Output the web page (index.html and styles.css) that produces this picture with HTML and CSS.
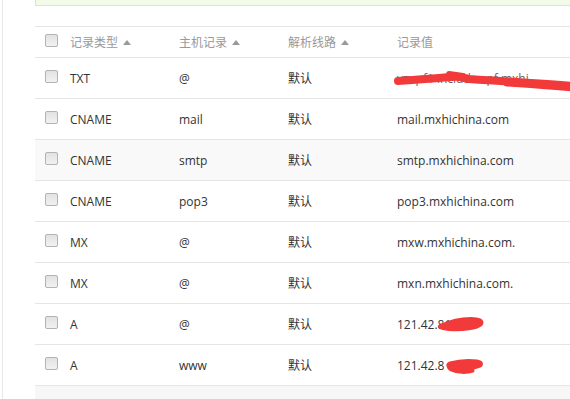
FILE: index.html
```html
<!DOCTYPE html>
<html>
<head>
<meta charset="utf-8">
<link rel="stylesheet" href="styles.css">
</head>
<body>
<div class="frame">
  <div class="content">
    <div class="notice"></div>
    <table class="records">
      <colgroup>
        <col class="c-check"><col class="c-col"><col class="c-col"><col class="c-col"><col>
      </colgroup>
      <thead>
        <tr>
          <th><span class="cb"></span></th>
          <th><span class="zh">记录类型</span><i class="sort"></i></th>
          <th><span class="zh">主机记录</span><i class="sort"></i></th>
          <th><span class="zh">解析线路</span><i class="sort"></i></th>
          <th><span class="zh">记录值</span></th>
        </tr>
      </thead>
      <tbody>
        <tr>
          <td><span class="cb"></span></td>
          <td>TXT</td>
          <td>@</td>
          <td><span class="zh">默认</span></td>
          <td class="val"><span class="faint">v=spf1 include:spf.mxhi</span>
            <svg class="redact" width="180" height="40" viewBox="0 0 180 40"><path d="M1 23 C 20 22, 40 20, 55 19 C 62 18, 66 20, 72 21 C 100 23, 140 25, 176 28" fill="none" stroke="#f23a3a" stroke-width="8" stroke-linecap="round"/><path d="M52 16 L66 18" fill="none" stroke="#f23a3a" stroke-width="6" stroke-linecap="round"/><path d="M110 25 C 130 26, 150 28, 178 30" fill="none" stroke="#f23a3a" stroke-width="7" stroke-linecap="round"/></svg>
          </td>
        </tr>
        <tr>
          <td><span class="cb"></span></td>
          <td>CNAME</td>
          <td>mail</td>
          <td><span class="zh">默认</span></td>
          <td>mail.mxhichina.com</td>
        </tr>
        <tr class="alt">
          <td><span class="cb"></span></td>
          <td>CNAME</td>
          <td>smtp</td>
          <td><span class="zh">默认</span></td>
          <td>smtp.mxhichina.com</td>
        </tr>
        <tr>
          <td><span class="cb"></span></td>
          <td>CNAME</td>
          <td>pop3</td>
          <td><span class="zh">默认</span></td>
          <td>pop3.mxhichina.com</td>
        </tr>
        <tr>
          <td><span class="cb"></span></td>
          <td>MX</td>
          <td>@</td>
          <td><span class="zh">默认</span></td>
          <td>mxw.mxhichina.com.</td>
        </tr>
        <tr>
          <td><span class="cb"></span></td>
          <td>MX</td>
          <td>@</td>
          <td><span class="zh">默认</span></td>
          <td>mxn.mxhichina.com.</td>
        </tr>
        <tr>
          <td><span class="cb"></span></td>
          <td>A</td>
          <td>@</td>
          <td><span class="zh">默认</span></td>
          <td class="val">121.42.81
            <svg class="redact" width="180" height="40" viewBox="0 0 180 40"><path d="M44 22 C 52 18, 62 15, 74 15 C 82 15, 86 17, 84 20 C 80 24, 66 26, 52 25 C 45 24, 42 23, 44 22 Z" fill="#f23a3a" stroke="#f23a3a" stroke-width="4" stroke-linejoin="round"/></svg>
          </td>
        </tr>
        <tr>
          <td><span class="cb"></span></td>
          <td>A</td>
          <td>www</td>
          <td><span class="zh">默认</span></td>
          <td class="val">121.42.8
            <svg class="redact" width="180" height="40" viewBox="0 0 180 40"><path d="M53 18 C 60 16, 72 15, 80 16 C 86 17, 86 21, 80 22 C 76 23, 74 24, 76 26 C 70 28, 60 28, 54 25 C 50 22, 50 19, 53 18 Z" fill="#f23a3a" stroke="#f23a3a" stroke-width="3" stroke-linejoin="round"/></svg>
          </td>
        </tr>
      </tbody>
    </table>
    <div class="footer"></div>
  </div>
</div>
</body>
</html>
```

FILE: styles.css
```css
html, body {
  margin: 0;
  padding: 0;
  background: #fff;
}
body {
  font-family: "Open Sans", "Noto Sans CJK SC", sans-serif;
  font-size: 12px;
  color: #333;
  width: 570px;
  height: 399px;
  overflow: hidden;
}
.frame {
  margin-left: 2px;
  border-left: 1px solid #e8e8e8;
  height: 399px;
  padding-left: 32px;
  overflow: hidden;
}
.content {
  width: 560px;
}
.notice {
  height: 5px;
  background: #f2fbe8;
  border-left: 1px solid #d3ebc0;
  border-bottom: 1px solid #d3ebc0;
}
.records {
  margin-top: 20px;
  width: 560px;
  border-collapse: collapse;
  table-layout: fixed;
  border-top: 1px solid #e5e5e5;
}
.c-check { width: 35px; }
.c-col { width: 109px; }
.records th, .records td {
  padding: 0;
  text-align: left;
  vertical-align: middle;
  white-space: nowrap;
  border-bottom: 1px solid #e5e5e5;
}
.records th {
  height: 30px;
  font-weight: normal;
  color: #999;
}
.records td {
  height: 40px;
}
.records th:first-child, .records td:first-child {
  padding-left: 10px;
}
.records tr.alt td {
  background: #f9f9f9;
}
.zh {
  font-family: "Noto Sans CJK SC", sans-serif;
  font-size: 12px;
}
.cb {
  display: block;
  width: 11px;
  height: 11px;
  border: 1px solid #b3b3b3;
  border-radius: 2px;
  background: linear-gradient(#e2e2e2, #f1f1f1);
  box-sizing: content-box;
  margin-top: -3px;
}
.sort {
  display: inline-block;
  width: 0;
  height: 0;
  border-left: 4.5px solid transparent;
  border-right: 4.5px solid transparent;
  border-bottom: 5px solid #9a9a9a;
  margin-left: 5px;
  vertical-align: 2px;
}
.val {
  position: relative;
  overflow: visible;
}
.faint {
  color: #666;
}
.redact {
  position: absolute;
  left: 0;
  top: 0;
  overflow: visible;
}
.footer {
  height: 20px;
  background: #f7f7f7;
}
```
